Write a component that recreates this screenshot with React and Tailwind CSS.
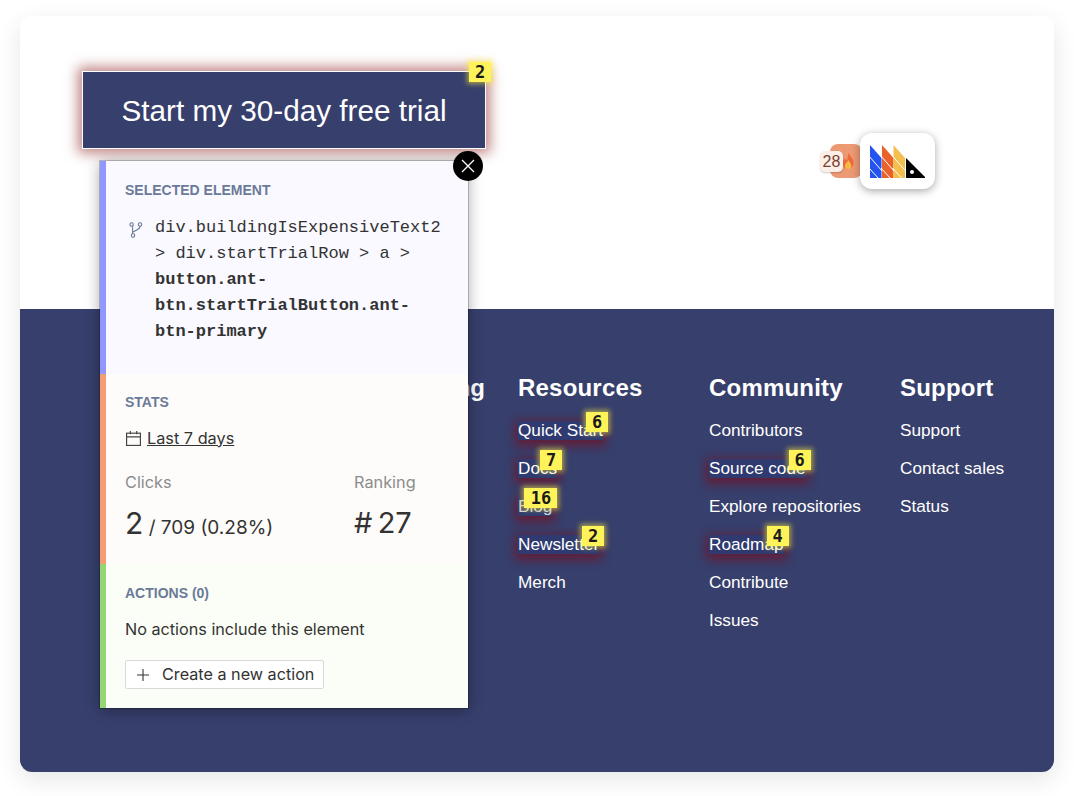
import React from "react";

function Badge({ children, className = "" }) {
  return (
    <span className={"absolute z-10 flex h-[20px] items-center justify-center bg-[#fff35a] text-[17px] font-bold leading-none text-[#1a1a1a] shadow-[0_0_5px_2px_rgba(255,240,60,0.55)] [font-family:'DejaVu_Sans_Mono',monospace] " + className}>
      {children}
    </span>
  );
}

function Link({ label, badge, wide, dim }) {
  return (
    <li className="h-[38px]">
      <span className={"relative inline-block h-[19px] leading-[19px] " + (badge ? "bg-[#2f3a70] shadow-[0_3px_10px_3px_rgba(125,10,25,0.6)]" : "")}>
        <span className={dim ? "text-[#d2d3dc]" : ""}>{label}</span>
        {badge && (
          <Badge className={"-right-[5px] -top-[9px] " + (wide ? "w-[33px]" : "w-[22px]")}>{badge}</Badge>
        )}
      </span>
    </li>
  );
}

function Column({ title, links, className = "" }) {
  return (
    <div className={className}>
      <h3 className="mb-[16px] h-[28px] text-[24px] font-bold leading-[28px] tracking-[0.2px] text-white">{title}</h3>
      <ul className="text-[17.2px] text-white">
        {links.map((l) => (
          <Link key={l.label} {...l} />
        ))}
      </ul>
    </div>
  );
}

function Logo() {
  return (
    <svg width="56" height="33" viewBox="0 0 56 33">
      <polygon points="0,0 11.5,13 11.5,33 0,33" fill="#2553f0" />
      <polygon points="12,0 23.5,13 23.5,33 12,33" fill="#e9622a" />
      <polygon points="23.5,0 35,13 35,33 23.5,33" fill="#f5bf4f" />
      <polygon points="36,13 55,32 55,33 36,33" fill="#000" />
      <g stroke="#fff" strokeWidth="1">
        <line x1="-1" y1="11" x2="12" y2="26" />
        <line x1="-1" y1="23" x2="9" y2="34" />
        <line x1="11" y1="11" x2="24" y2="26" />
        <line x1="11" y1="23" x2="21" y2="34" />
        <line x1="22.5" y1="11" x2="35.5" y2="26" />
        <line x1="22.5" y1="23" x2="32.5" y2="34" />
      </g>
      <circle cx="42" cy="27" r="2" fill="#fff" />
    </svg>
  );
}

function Flame() {
  return (
    <svg width="13" height="19" viewBox="0 0 18 24">
      <path d="M9 0c1 4 7 7 7 14a8 8 0 0 1-15 4C-1 13 3 10 4 7c1 2 2 3 3 3 1-3 1-7 2-10z" fill="#ee6a3a" />
      <path d="M9 10c1 3 4 5 4 8a4.5 4.5 0 0 1-9 0c0-3 3-4 5-8z" fill="#f7b84a" />
    </svg>
  );
}

function Label({ children }) {
  return <div className="text-[14px] font-bold leading-[17px] text-[#6b7a99] [font-family:'Liberation_Sans',Arial,sans-serif]">{children}</div>;
}

export default function App() {
  return (
    <div className="h-[796px] w-[1074px] bg-white px-[20px] pt-[16px] pb-[24px] [font-family:'Liberation_Sans',Arial,sans-serif]">
      <div className="relative flex h-[756px] flex-col overflow-hidden rounded-[12px] shadow-[0_8px_24px_rgba(0,0,0,0.1)]">
        <div className="h-[293px] bg-white pt-[55px] pl-[62px]">
          <div className="relative w-[404px]">
            <button className="flex h-[78px] w-[404px] items-center justify-center border border-white bg-[#373f6c] pt-[2px] text-[29.7px] text-white shadow-[0_0_12px_4px_rgba(140,30,30,0.55)]">
              Start my 30-day free trial
            </button>
            <Badge className="-right-[5px] -top-[9px] w-[22px]">2</Badge>
          </div>
        </div>
        <div className="flex flex-1 bg-[#373f6c] pt-[65px]">
          <div className="w-[498px] pr-[33px] text-right">
            <h3 className="h-[28px] text-[24px] font-bold leading-[28px] text-white">Pricing</h3>
          </div>
          <Column
            className="w-[191px]"
            title="Resources"
            links={[
              { label: "Quick Start", badge: "6" },
              { label: "Docs", badge: "7" },
              { label: "Blog", badge: "16", wide: true, dim: true },
              { label: "Newsletter", badge: "2" },
              { label: "Merch" },
            ]}
          />
          <Column
            className="w-[191px]"
            title="Community"
            links={[
              { label: "Contributors" },
              { label: "Source code", badge: "6" },
              { label: "Explore repositories" },
              { label: "Roadmap", badge: "4" },
              { label: "Contribute" },
              { label: "Issues" },
            ]}
          />
          <Column
            title="Support"
            links={[{ label: "Support" }, { label: "Contact sales" }, { label: "Status" }]}
          />
        </div>

        {/* Floating inspector panel */}
        <div className="absolute left-[80px] top-[145px] w-[368px] text-[#333] shadow-[0_0_0_1px_rgba(0,0,0,0.2),0_2px_14px_rgba(0,0,0,0.35)] [font-family:Inter,sans-serif]">
          <div className="h-[213px] border-l-[6px] border-[#9297ff] bg-[#f9f9ff] pl-[19px] pt-[21px]">
            <Label>SELECTED ELEMENT</Label>
            <div className="mt-[16px] flex">
              <svg className="ml-[3px] mt-[7px] shrink-0" width="15" height="16" viewBox="0 0 15 16" fill="none" stroke="#6b7a99" strokeWidth="1.1">
                <circle cx="5" cy="13.5" r="1.7" />
                <circle cx="12" cy="2.5" r="1.7" />
                <circle cx="3.6" cy="2.5" r="1.7" />
                <path d="M4.6 4.2v7.6M12 4.2c0 3.5-4 3.5-7 6" />
              </svg>
              <div className="ml-[12px] w-[292px] text-[17px] leading-[26px] text-[#333] [font-family:'Liberation_Mono',monospace]">
                div.buildingIsExpensiveText2 &gt; div.startTrialRow &gt; a &gt; <b>button.ant-btn.startTrialButton.ant-btn-primary</b>
              </div>
            </div>
          </div>
          <div className="h-[190px] border-l-[6px] border-[#f49c74] bg-[#fefcfa] pl-[19px] pt-[20px]">
            <Label>STATS</Label>
            <div className="mt-[15px] flex h-[24px] items-center text-[16.3px] text-[#333]">
              <svg className="mr-[5px]" width="17" height="17" viewBox="0 0 16 16" fill="none" stroke="#444" strokeWidth="1.1">
                <rect x="1.5" y="3" width="13" height="11.5" />
                <path d="M1.5 6.5h13M5 1v3M11 1v3" />
              </svg>
              <span className="underline">Last 7 days</span>
            </div>
            <div className="mt-[22px] flex">
              <div className="w-[229px]">
                <div className="text-[16.3px] leading-[20px] text-[#8c8c8c]">Clicks</div>
                <div className="mt-[11px] leading-[40px] text-[#333]">
                  <span className="text-[30px]">2</span>
                  <span className="text-[19px]"> / 709 (0.28%)</span>
                </div>
              </div>
              <div>
                <div className="text-[16.3px] leading-[20px] text-[#8c8c8c]">Ranking</div>
                <div className="mt-[11px] text-[29px] leading-[40px] text-[#333]">#&#8201;27</div>
              </div>
            </div>
          </div>
          <div className="h-[144px] border-l-[6px] border-[#94d674] bg-[#fafef6] pl-[19px] pt-[21px]">
            <Label>ACTIONS (0)</Label>
            <div className="mt-[17px] text-[16.2px] leading-[20px] text-[#333]">No actions include this element</div>
            <button className="mt-[21px] flex h-[29px] w-[199px] items-center rounded-[2px] border border-[#d9d9d9] bg-white pl-[10px] text-[16.2px] text-[#333]">
              <svg className="mr-[12px]" width="14" height="14" viewBox="0 0 14 14" stroke="#333" strokeWidth="1.1">
                <path d="M7 1v12M1 7h12" />
              </svg>
              Create a new action
            </button>
          </div>
          <button className="absolute -right-[15px] -top-[10px] flex h-[30px] w-[30px] items-center justify-center rounded-full bg-black">
            <svg width="14" height="14" viewBox="0 0 14 14" stroke="#fff" strokeWidth="1.3">
              <path d="M1 1l12 12M13 1L1 13" />
            </svg>
          </button>
        </div>

        {/* Toolbar button */}
        <div className="absolute left-[810px] top-[128px] flex h-[34px] w-[32px] items-center justify-end rounded-[8px] bg-[#ec9a74] pr-[7px]">
          <Flame />
        </div>
        <div className="absolute left-[800px] top-[135px] flex h-[21px] w-[23px] items-center justify-center rounded-[5px] bg-[#fbefe8] text-[16px] text-[#7a4030] shadow-[0_1px_2px_rgba(0,0,0,0.2)]">
          28
        </div>
        <div className="absolute left-[840px] top-[117px] flex h-[56px] w-[75px] items-center justify-center rounded-[12px] bg-white shadow-[0_2px_8px_rgba(0,0,0,0.35)]">
          <Logo />
        </div>
      </div>
    </div>
  );
}
